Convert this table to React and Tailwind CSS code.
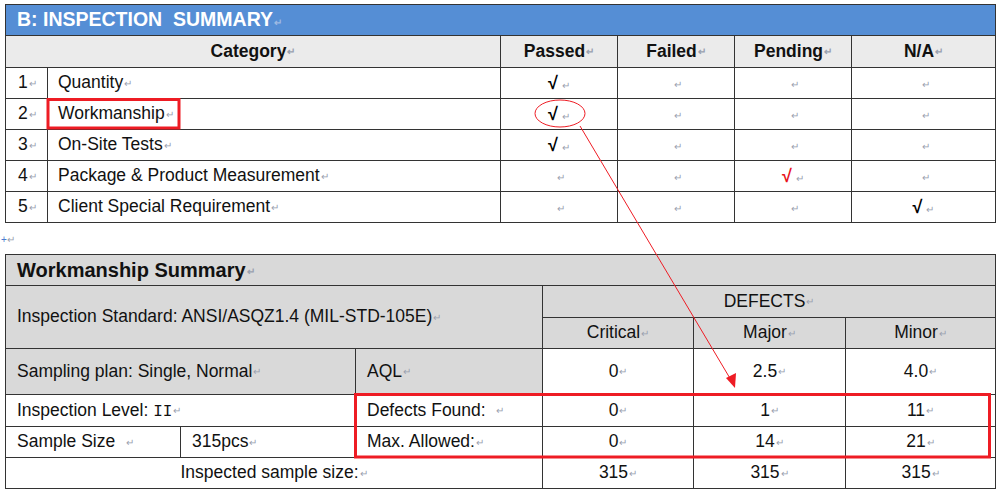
const P = () => <span className="text-[10px] text-gray-400 align-middle ml-[1px]">↵</span>;

const Check = ({ red }) => (
  <span className={`font-bold text-[18px] ${red ? "text-[#e8141b]" : "text-black"}`}>√</span>
);

const td = "border border-[#333] px-[11px] text-[17.5px] leading-none";

const rows = [
  { n: "1", name: "Quantity", col: 0 },
  { n: "2", name: "Workmanship", col: 0 },
  { n: "3", name: "On-Site Tests", col: 0 },
  { n: "4", name: "Package & Product Measurement", col: 2, red: true },
  { n: "5", name: "Client Special Requirement", col: 3 },
];

export default function App() {
  return (
    <div className="relative w-[1000px] h-[493px] bg-white text-[#111] font-['Liberation_Sans',Arial,sans-serif] overflow-hidden">
      <div className="pt-[4px] pl-[5px]">
        <table className="table-fixed border-collapse w-[990px]">
          <colgroup>
            <col className="w-[42px]" />
            <col className="w-[453px]" />
            <col className="w-[117px]" />
            <col className="w-[117px]" />
            <col className="w-[117px]" />
            <col className="w-[144px]" />
          </colgroup>
          <tbody>
            <tr className="h-[31px] bg-[#558ed5]">
              <td colSpan={6} className="border border-[#333] px-[11px] text-white font-bold text-[19.5px] leading-none">
                B: INSPECTION&nbsp; SUMMARY<span className="text-[10px] text-[#9db9e3] ml-[1px]">↵</span>
              </td>
            </tr>
            <tr className="h-[32px] bg-[#ebebeb] font-bold">
              <td colSpan={2} className={`${td} text-center`}>Category<P /></td>
              <td className={`${td} text-center`}>Passed<P /></td>
              <td className={`${td} text-center`}>Failed<P /></td>
              <td className={`${td} text-center`}>Pending<P /></td>
              <td className={`${td} text-center`}>N/A<P /></td>
            </tr>
            {rows.map((r) => (
              <tr key={r.n} className="h-[31px]">
                <td className={`${td} pl-[12px]`}>{r.n}<P /></td>
                <td className={`${td} pl-[10px]`}>{r.name}<P /></td>
                {[0, 1, 2, 3].map((c) => (
                  <td key={c} className={`${td} text-center`}>
                    {c === r.col && <Check red={r.red} />}
                    <span className="ml-1 text-[10px] text-gray-400">↵</span>
                  </td>
                ))}
              </tr>
            ))}
          </tbody>
        </table>
      </div>

      <div className="h-[31px] pl-[1px] pt-[12px] text-[10px] text-gray-400 leading-none">
        <span className="text-[#4a7bd0]">+</span>↵
      </div>

      <div className="pl-[5px]">
        <table className="table-fixed border-collapse w-[990px]">
          <colgroup>
            <col className="w-[175px]" />
            <col className="w-[175px]" />
            <col className="w-[187px]" />
            <col className="w-[151px]" />
            <col className="w-[152px]" />
            <col className="w-[150px]" />
          </colgroup>
          <tbody>
            <tr className="h-[31px] bg-[#d9d9d9]">
              <td colSpan={6} className={`${td} font-bold text-[20px]`}>Workmanship Summary<P /></td>
            </tr>
            <tr className="h-[32px] bg-[#d9d9d9]">
              <td colSpan={3} rowSpan={2} className={td}>Inspection Standard: ANSI/ASQZ1.4 (MIL-STD-105E)<P /></td>
              <td colSpan={3} className={`${td} text-center`}>DEFECTS<P /></td>
            </tr>
            <tr className="h-[31px] bg-[#d9d9d9]">
              <td className={`${td} text-center`}>Critical<P /></td>
              <td className={`${td} text-center`}>Major<P /></td>
              <td className={`${td} text-center`}>Minor<P /></td>
            </tr>
            <tr className="h-[46px]">
              <td colSpan={2} className={`${td} bg-[#d9d9d9]`}>Sampling plan: Single, Normal<P /></td>
              <td className={`${td} bg-[#d9d9d9]`}>AQL<P /></td>
              <td className={`${td} text-center`}>0<P /></td>
              <td className={`${td} text-center`}>2.5<P /></td>
              <td className={`${td} text-center`}>4.0<P /></td>
            </tr>
            <tr className="h-[32px]">
              <td colSpan={2} className={td}>
                Inspection Level: <span className="font-['Liberation_Mono',monospace] text-[16px]">II</span><P />
              </td>
              <td className={td}>Defects Found: &nbsp;<P /></td>
              <td className={`${td} text-center`}>0<P /></td>
              <td className={`${td} text-center`}>1<P /></td>
              <td className={`${td} text-center`}>11<P /></td>
            </tr>
            <tr className="h-[31px]">
              <td className={td}>Sample Size &nbsp;<P /></td>
              <td className={td}>315pcs<P /></td>
              <td className={td}>Max. Allowed:<P /></td>
              <td className={`${td} text-center`}>0<P /></td>
              <td className={`${td} text-center`}>14<P /></td>
              <td className={`${td} text-center`}>21<P /></td>
            </tr>
            <tr className="h-[31px]">
              <td colSpan={3} className={`${td} text-center`}>Inspected sample size:<P /></td>
              <td className={`${td} text-center`}>315<P /></td>
              <td className={`${td} text-center`}>315<P /></td>
              <td className={`${td} text-center`}>315<P /></td>
            </tr>
          </tbody>
        </table>
      </div>

      <svg className="absolute inset-0 pointer-events-none" width="1000" height="493" viewBox="0 0 1000 493">
        <rect x="48" y="99.5" width="131" height="28.5" fill="none" stroke="#ee1c24" strokeWidth="3" />
        <ellipse cx="560" cy="113.5" rx="25" ry="13.5" fill="none" stroke="#ee1c24" strokeWidth="1" />
        <line x1="580" y1="126" x2="731" y2="380" stroke="#ee1c24" strokeWidth="1" />
        <polygon points="735,388 726,378 736,373" fill="#ee1c24" />
        <rect x="355.5" y="394.5" width="634" height="62.5" fill="none" stroke="#ee1c24" strokeWidth="3" />
      </svg>
    </div>
  );
}
